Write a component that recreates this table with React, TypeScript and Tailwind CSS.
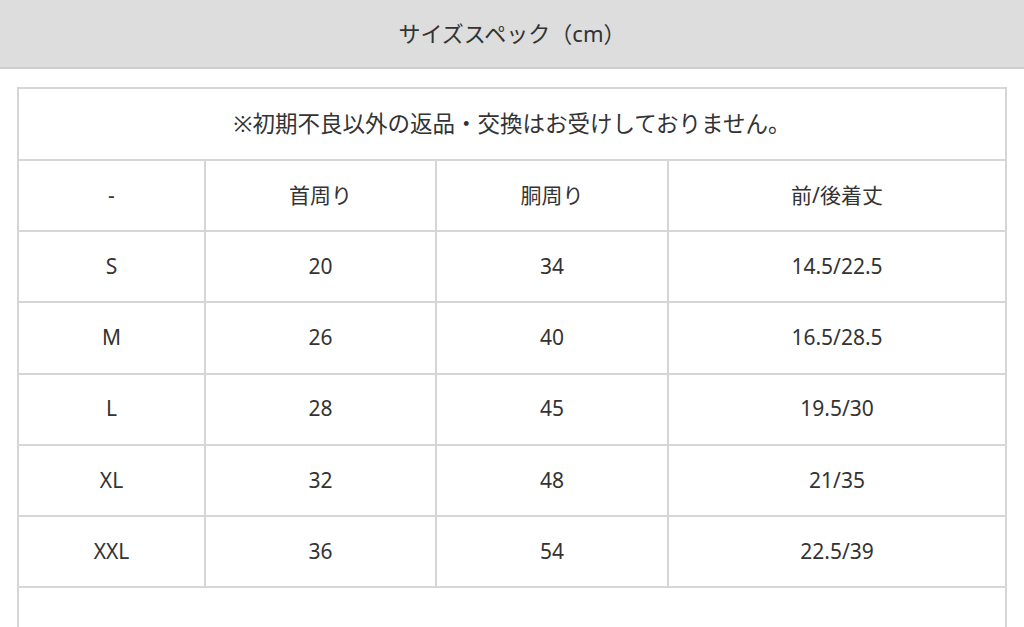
const rows = [
  ["S", "20", "34", "14.5/22.5"],
  ["M", "26", "40", "16.5/28.5"],
  ["L", "28", "45", "19.5/30"],
  ["XL", "32", "48", "21/35"],
  ["XXL", "36", "54", "22.5/39"],
];

const cell = "border-2 border-[#d6d6d6] text-center align-middle font-normal";

export default function App() {
  return (
    <div className="min-h-screen bg-white text-[#333] font-['Noto_Sans','Noto_Sans_CJK_JP',sans-serif]">
      <div className="h-[69px] bg-[#dddddd] border-b-2 border-[#cdcdcd] flex items-center justify-center text-[22px]">
        サイズスペック（cm）
      </div>
      <div className="px-[17px] pt-[18px]">
        <table className="w-full table-fixed border-collapse text-[21px]">
          <colgroup>
            <col className="w-[187px]" />
            <col className="w-[231px]" />
            <col className="w-[232px]" />
            <col />
          </colgroup>
          <tbody>
            <tr className="h-[72px]">
              <td colSpan={4} className={cell + " text-[22.5px]"}>
                ※初期不良以外の返品・交換はお受けしておりません。
              </td>
            </tr>
            <tr className="h-[71.2px]">
              <th className={cell}>-</th>
              <th className={cell}>首周り</th>
              <th className={cell}>胴周り</th>
              <th className={cell}>前/後着丈</th>
            </tr>
            {rows.map((r) => (
              <tr key={r[0]} className="h-[71.2px]">
                {r.map((v, i) => (
                  <td key={i} className={cell}>
                    {v}
                  </td>
                ))}
              </tr>
            ))}
            <tr className="h-[71.2px]">
              <td colSpan={4} className={cell}></td>
            </tr>
          </tbody>
        </table>
      </div>
    </div>
  );
}
